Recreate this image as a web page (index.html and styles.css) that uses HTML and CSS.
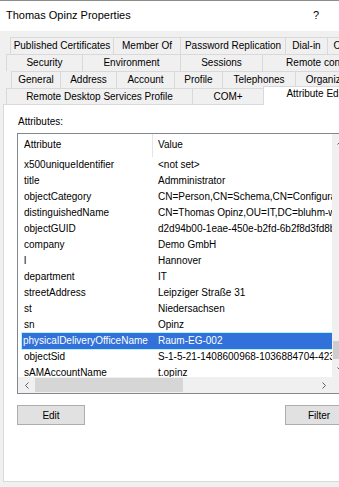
FILE: index.html
```html
<html>
<head>
<meta http-equiv="Content-Type" content="text/html; charset=utf-8"/>
<title>Thomas Opinz Properties</title>
<link rel="stylesheet" href="styles.css">
</head>
<body>
<div class="window">

<div class="titlebar">
<span class="title">Thomas Opinz Properties</span>
<span class="help">?</span>
</div>

<div class="tabs">
<div class="tabrow row1">
<div class="tab">Published Certificates</div>
<div class="tab">Member Of</div>
<div class="tab">Password Replication</div>
<div class="tab">Dial-in</div>
<div class="tab">Object</div>
</div>
<div class="tabrow row2">
<div class="tab">Security</div>
<div class="tab">Environment</div>
<div class="tab">Sessions</div>
<div class="tab">Remote control</div>
</div>
<div class="tabrow row3">
<div class="tab">General</div>
<div class="tab">Address</div>
<div class="tab">Account</div>
<div class="tab">Profile</div>
<div class="tab">Telephones</div>
<div class="tab">Organization</div>
</div>
<div class="tabrow row4">
<div class="tab">Remote Desktop Services Profile</div>
<div class="tab">COM+</div>
<div class="tab sel">Attribute Editor</div>
</div>
</div> <!-- tabs -->

<div class="panel">
<div class="label">Attributes:</div>
<div class="listview">
<div class="lv-content">
<div class="lv-head"><div class="c1">Attribute</div><div class="c2">Value</div></div>
<div class="lv-row"><div class="c1">x500uniqueIdentifier</div><div class="c2">&lt;not set&gt;</div></div>
<div class="lv-row"><div class="c1">title</div><div class="c2">Admministrator</div></div>
<div class="lv-row"><div class="c1">objectCategory</div><div class="c2">CN=Person,CN=Schema,CN=Configuration,DC=bluhm-web,DC=local</div></div>
<div class="lv-row"><div class="c1">distinguishedName</div><div class="c2">CN=Thomas Opinz,OU=IT,DC=bluhm-web,DC=local</div></div>
<div class="lv-row"><div class="c1">objectGUID</div><div class="c2">d2d94b00-1eae-450e-b2fd-6b2f8d3fd8b4</div></div>
<div class="lv-row"><div class="c1">company</div><div class="c2">Demo GmbH</div></div>
<div class="lv-row"><div class="c1">l</div><div class="c2">Hannover</div></div>
<div class="lv-row"><div class="c1">department</div><div class="c2">IT</div></div>
<div class="lv-row"><div class="c1">streetAddress</div><div class="c2">Leipziger Straße 31</div></div>
<div class="lv-row"><div class="c1">st</div><div class="c2">Niedersachsen</div></div>
<div class="lv-row"><div class="c1">sn</div><div class="c2">Opinz</div></div>
<div class="lv-row sel"><div class="c1">physicalDeliveryOfficeName</div><div class="c2">Raum-EG-002</div></div>
<div class="lv-row"><div class="c1">objectSid</div><div class="c2">S-1-5-21-1408600968-1036884704-4236198514-1104</div></div>
<div class="lv-row"><div class="c1">sAMAccountName</div><div class="c2">t.opinz</div></div>
</div>
<div class="vscroll">
<div class="sb-btn"><svg width="7" height="4" viewBox="0 0 7 4"><polyline points="0.5,3.5 3.5,0.5 6.5,3.5" fill="none" stroke="#606060"/></svg></div>
<div class="vtrack"><div class="vthumb"></div></div>
<div class="sb-btn"><svg width="7" height="4" viewBox="0 0 7 4"><polyline points="0.5,0.5 3.5,3.5 6.5,0.5" fill="none" stroke="#606060"/></svg></div>
</div>
<div class="hscroll">
<div class="sb-btn hbtn"><svg width="4" height="7" viewBox="0 0 4 7"><polyline points="3.5,0.5 0.5,3.5 3.5,6.5" fill="none" stroke="#606060"/></svg></div>
<div class="htrack"><div class="hthumb"></div></div>
<div class="sb-btn hbtn"><svg width="4" height="7" viewBox="0 0 4 7"><polyline points="0.5,0.5 3.5,3.5 0.5,6.5" fill="none" stroke="#606060"/></svg></div>
</div>
<div class="corner"></div>
</div> <!-- listview -->

<div class="buttons">
<button type="button">Edit</button>
<button type="button">Filter</button>
</div>
</div> <!-- panel -->

</div> <!-- window -->
</body>
</html>
```

FILE: styles.css
```css
body {
	margin: 0;
	background: #f0f0f0;
	overflow: hidden;
	font-family: "Liberation Sans", Arial, sans-serif;
	font-size: 10px;
	color: #000;
}

.window {
	width: 380px;
}

.titlebar {
	height: 31px;
	box-sizing: border-box;
	border-top: 1px solid #8c8c8c;
	background: #fff;
	display: flex;
	align-items: center;
	padding: 0 6px 3px 6px;
}

.title {
	width: 307px;
	font-size: 11px;
}

.help {
	font-size: 11px;
}

.tabs {
	padding-top: 6px;
}

.tabrow {
	display: grid;
	height: 17px;
}

.row1 {
	padding-left: 10px;
	grid-template-columns: 103px 67px 105px 42px 41px;
}

.row2 {
	padding-left: 6px;
	grid-template-columns: 76px 98px 82px 115px;
}

.row3 {
	padding-left: 11px;
	grid-template-columns: 49px 56px 58px 48px 73px 77px;
}

.row4 {
	height: 16px;
	padding-left: 6px;
	grid-template-columns: 186px 71px 112px;
}

.tab {
	border-top: 1px solid #d9d9d9;
	border-left: 1px solid #d9d9d9;
	background: #f0f0f0;
	text-align: center;
	line-height: 16px;
	white-space: nowrap;
	overflow: hidden;
}

.row4 .tab {
	line-height: 15px;
}

.row4 .tab.sel {
	background: #fff;
	margin: -2px 0 -1px 0;
	position: relative;
	z-index: 1;
	line-height: 14px;
}

.panel {
	margin-left: 3px;
	width: 365px;
	height: 378px;
	box-sizing: border-box;
	background: #fff;
	border: 1px solid #d9d9d9;
	padding: 11px 14px 0 13px;
}

.label {
	line-height: 12px;
	padding-left: 1px;
}

.listview {
	margin-top: 5px;
	width: 333px;
	height: 261px;
	box-sizing: border-box;
	border: 1px solid #828790;
	display: grid;
	grid-template-columns: 1fr 17px;
	grid-template-rows: 1fr 16px;
}

.lv-content {
	overflow: hidden;
	white-space: nowrap;
}

.lv-head {
	display: flex;
	height: 23px;
	line-height: 22px;
}

.lv-head .c1 {
	flex: none;
	width: 128px;
	padding-left: 6px;
	border-right: 1px solid #e5e5e5;
}

.lv-head .c2 {
	padding-left: 5px;
}

.lv-row {
	display: flex;
	height: 16px;
	line-height: 16px;
	margin-left: 4px;
}

.lv-row .c1 {
	flex: none;
	width: 128px;
	padding-left: 2px;
}

.lv-row .c2 {
	flex: none;
	padding-left: 6px;
}

.lv-row.sel {
	background: #3171d9;
	color: #fff;
	outline: 1px solid #b0f3ff;
}

.lv-row.sel .c1 {
	padding-left: 1px;
	width: 129px;
}

.vscroll {
	display: flex;
	flex-direction: column;
	background: #f0f0f0;
}

.sb-btn {
	height: 17px;
	display: flex;
	align-items: center;
	justify-content: center;
}

.vtrack {
	flex: 1;
	display: flex;
	flex-direction: column;
	justify-content: flex-end;
}

.vthumb {
	height: 18px;
	margin: 0 1px 1px 1px;
	background: #cdcdcd;
}

.hscroll {
	display: flex;
	background: #f0f0f0;
}

.hbtn {
	width: 17px;
	height: 16px;
}

.htrack {
	flex: 1;
	display: flex;
}

.hthumb {
	width: 148px;
	margin: 1px 0;
	background: #d6d6d6;
}

.corner {
	background: #f0f0f0;
}

.buttons {
	display: flex;
	justify-content: space-between;
	margin-top: 11px;
}

.buttons button {
	width: 68px;
	height: 20px;
	padding: 0;
	background: #e1e1e1;
	border: 1px solid #adadad;
	font-family: "Liberation Sans", Arial, sans-serif;
	font-size: 10px;
	color: #000;
}
```
